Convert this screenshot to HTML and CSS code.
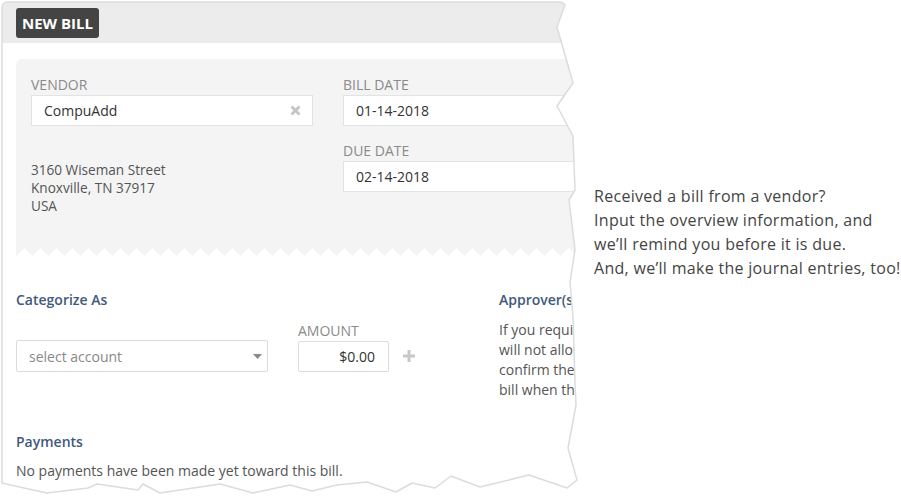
FILE: index.html
```html
<!DOCTYPE html>
<html>
<head>
<meta charset="utf-8">
<link rel="stylesheet" href="styles.css">
</head>
<body>
<div class="page">
  <div class="sheet">
    <div class="card">
      <div class="head"><span class="badge">NEW BILL</span></div>
      <div class="body">
        <div class="panel">
          <div class="col">
            <div class="label">Vendor</div>
            <div class="input"><span>CompuAdd</span>
              <svg class="clear" width="11" height="11" viewBox="0 0 11 11"><path d="M1.5 1.5 L9.5 9.5 M9.5 1.5 L1.5 9.5" stroke="#c4c4c4" stroke-width="2.8" stroke-linecap="butt"/></svg>
            </div>
            <div class="address">3160 Wiseman Street<br>Knoxville, TN 37917<br>USA</div>
          </div>
          <div class="col">
            <div class="label">Bill Date</div>
            <div class="input">01-14-2018</div>
            <div class="label due">Due Date</div>
            <div class="input">02-14-2018</div>
          </div>
        </div>
        <div class="zig"></div>
        <div class="sec">
          <div class="cat">
            <div class="title">Categorize As</div>
            <div class="cat-row">
              <div class="select"><span>select account</span>
                <svg width="9" height="5" viewBox="0 0 9 5"><path d="M0 0 H9 L4.5 5 Z" fill="#888"/></svg>
              </div>
              <div class="amount">
                <div class="label">Amount</div>
                <div class="input">$0.00</div>
              </div>
              <svg class="plus" width="12" height="12" viewBox="0 0 12 12"><path d="M6 0 V12 M0 6 H12" stroke="#c8c8c8" stroke-width="3"/></svg>
            </div>
          </div>
          <div class="approver">
            <div class="title">Approver(s)</div>
            <p class="text">If you require approvers, the system<br>will not allow payment until they<br>confirm the details and approve the<br>bill when they are ready.</p>
          </div>
        </div>
        <div class="title pay">Payments</div>
        <p class="text pay-text">No payments have been made yet toward this bill.</p>
      </div>
    </div>
    <svg class="tear" width="580" height="499" viewBox="0 0 580 499"><polygon points="2,7 3,4 5,2.5 8,2 560,2 563,3 565,5 557,27 573,83 557,106 573,136 575,190 569,200 575,250 570,282 573,317 575,383 576,405 568,448 577,480 567,488 529,475 480,487 451,476 435,488 412,483 396,492 367,482 337,485 312,491 290,485 253,493 220,484 160,493 143,484 138,490 97,484 88,488 47,493 15,486 2,483" fill="none" stroke="#dcdcdc" stroke-width="1.5" stroke-linejoin="round"/></svg>
  </div>
  <div class="aside">
    Received a bill from a vendor?<br>
    Input the overview information, and<br>
    we’ll remind you before it is due.<br>
    And, we’ll make the journal entries, too!
  </div>
</div>
</body>
</html>
```

FILE: styles.css
```css
* { box-sizing: border-box; }
body {
  margin: 0;
  width: 901px;
  height: 499px;
  overflow: hidden;
  background: #fff;
  font-family: "Open Sans", "DejaVu Sans", sans-serif;
  color: #555;
}
.page { display: flex; }
.sheet { position: relative; width: 580px; height: 499px; flex: none; }
.card {
  width: 100%;
  height: 100%;
  padding: 2px 0 0 2px;
  background: #fff;
  overflow: hidden;
  clip-path: polygon(2px 7px, 3px 4px, 5px 2.5px, 8px 2px, 560px 2px, 563px 3px, 565px 5px, 557px 27px, 573px 83px, 557px 106px, 573px 136px, 575px 190px, 569px 200px, 575px 250px, 570px 282px, 573px 317px, 575px 383px, 576px 405px, 568px 448px, 577px 480px, 567px 488px, 529px 475px, 480px 487px, 451px 476px, 435px 488px, 412px 483px, 396px 492px, 367px 482px, 337px 485px, 312px 491px, 290px 485px, 253px 493px, 220px 484px, 160px 493px, 143px 484px, 138px 490px, 97px 484px, 88px 488px, 47px 493px, 15px 486px, 2px 483px);
}
.tear { position: absolute; left: 0; top: 0; pointer-events: none; }
.head {
  height: 41px;
  width: 620px;
  background: #ececec;
  padding: 6px 14px 0;
}
.badge {
  display: inline-block;
  height: 30px;
  line-height: 30px;
  padding: 0 6px;
  background: #444;
  color: #fff;
  font-weight: 700;
  font-size: 15px;
  border-radius: 3px;
}
.body { padding: 16px 0 0 14px; width: 640px; }
.panel {
  width: 600px;
  height: 189px;
  background: #f4f4f4;
  border-radius: 6px 6px 0 0;
  padding: 17px 15px 0;
  display: grid;
  grid-template-columns: 282px 282px;
  column-gap: 30px;
  align-items: start;
}
.zig {
  width: 600px;
  height: 8px;
  background-image: linear-gradient(135deg, #f4f4f4 50%, transparent 50%), linear-gradient(225deg, #f4f4f4 50%, transparent 50%);
  background-size: 16px 16px;
  background-position: 0 -8px;
  background-repeat: repeat-x;
}
.label {
  font-size: 14px;
  line-height: 17px;
  color: #8a8a8a;
  text-transform: uppercase;
  margin-bottom: 2px;
}
.label.due { margin-top: 16px; }
.input {
  height: 31px;
  border: 1px solid #e3e3e3;
  background: #fff;
  padding: 0 12px;
  display: flex;
  align-items: center;
  justify-content: space-between;
  font-size: 14px;
  color: #333;
}
.clear { margin-right: -1px; }
.address {
  margin-top: 35px;
  font-size: 13.6px;
  line-height: 18px;
  color: #555;
}
.sec { display: flex; margin-top: 35px; }
.cat { width: 483px; flex: none; }
.title {
  font-size: 14px;
  line-height: 17px;
  font-weight: 600;
  color: #3f5a7a;
}
.cat-row { display: flex; align-items: flex-end; margin-top: 14px; }
.select {
  width: 252px;
  height: 32px;
  border: 1px solid #dcdcdc;
  border-radius: 2px;
  background: #fff;
  padding: 0 5px 0 12px;
  display: flex;
  align-items: center;
  justify-content: space-between;
  font-size: 14px;
  color: #888;
}
.amount { margin-left: 30px; }
.amount .input { width: 91px; justify-content: flex-end; padding-right: 13px; border-color: #dcdcdc; border-radius: 2px; }
.plus { margin-left: 14px; margin-bottom: 10px; }
.text {
  margin: 12px 0 0;
  font-size: 14px;
  line-height: 20px;
  color: #555;
  white-space: nowrap;
}
.title.pay { margin-top: 33px; }
.pay-text { line-height: 18px; margin-top: 12px; }
.aside {
  margin-left: 14px;
  padding-top: 184px;
  font-size: 16px;
  letter-spacing: 0.3px;
  line-height: 24px;
  color: #444;
  white-space: nowrap;
}
```
